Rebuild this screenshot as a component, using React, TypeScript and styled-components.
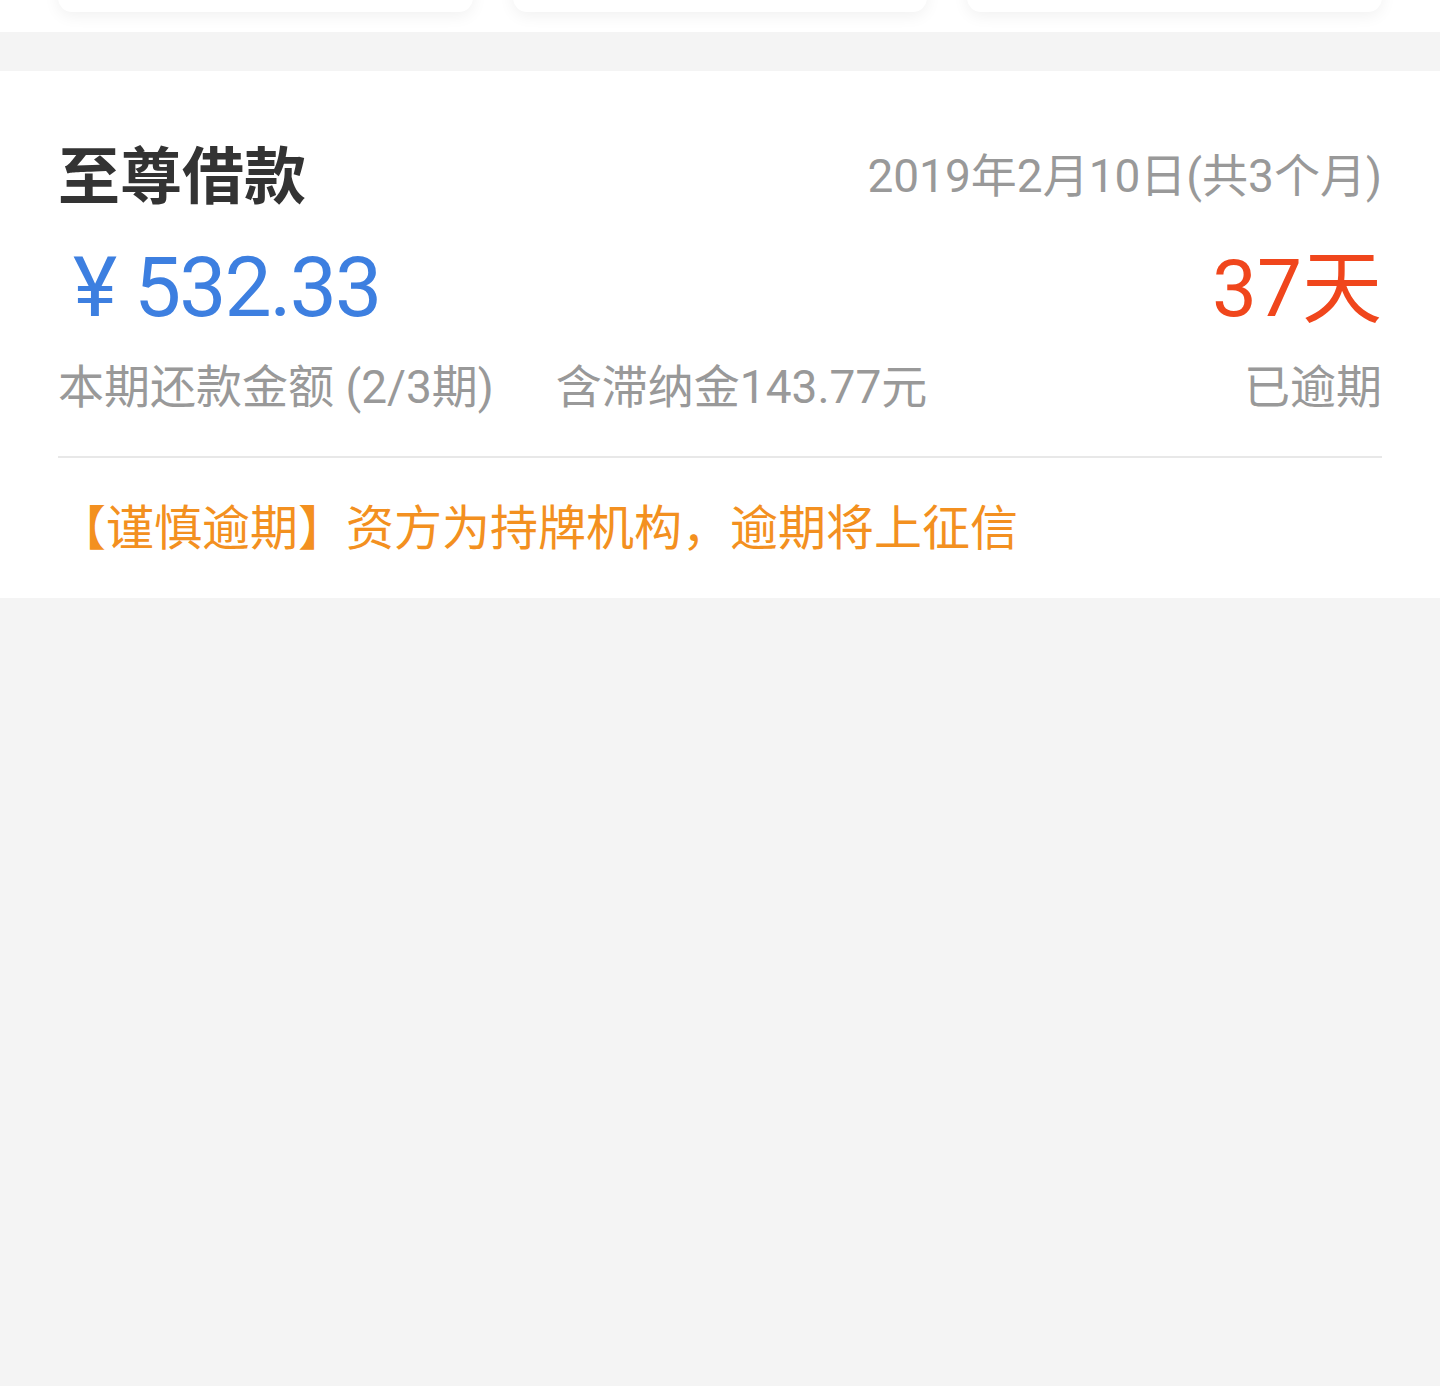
import React from 'react';
import styled, { createGlobalStyle } from 'styled-components';

const GlobalStyle = createGlobalStyle`
  html, body {
    margin: 0;
    padding: 0;
    background: #f4f4f4;
    font-family: Roboto, "Noto Sans CJK SC", sans-serif;
  }
`;

const Page = styled.div`
  width: 1440px;
  min-height: 1386px;
  background: #f4f4f4;
`;

const TopArea = styled.div`
  height: 32px;
  background: #fff;
  overflow: hidden;
  display: flex;
  gap: 40px;
  padding: 0 58px;
`;

const TopCard = styled.div`
  flex: 1;
  height: 200px;
  margin-top: -188px;
  background: #fff;
  border-radius: 14px;
  box-shadow: 0 4px 16px rgba(0, 0, 0, 0.06);
`;

const Card = styled.div`
  margin-top: 39px;
  background: #fff;
  padding: 49px 58px 0;
`;

const Row = styled.div<{ h: number }>`
  height: ${(p) => p.h}px;
  display: flex;
  align-items: center;
  justify-content: space-between;
`;

const Title = styled.div`
  font-size: 62px;
  font-weight: 700;
  color: #333;
  font-family: "Noto Sans CJK SC", sans-serif;
`;

const DateText = styled.div`
  font-size: 46px;
  color: #999;
`;

const Amount = styled.div`
  font-size: 84px;
  letter-spacing: -2px;
  color: #3d7fe0;
  padding-left: 15px;
`;

const Overdue = styled.div`
  font-size: 80px;
  color: #f0461c;
  padding-bottom: 12px;
`;

const SubLeft = styled.div`
  display: flex;
  gap: 62px;
`;

const Sub = styled.div`
  font-size: 46px;
  color: #999;
`;

const Divider = styled.div`
  margin-top: 40px;
  height: 2px;
  background: #e8e8e8;
`;

const Notice = styled.div`
  height: 140px;
  padding-bottom: 8px;
  box-sizing: border-box;
  display: flex;
  align-items: center;
  font-size: 48px;
  color: #f39020;
  font-family: "Noto Sans CJK SC", sans-serif;
`;

export default function App() {
  return (
    <Page>
      <GlobalStyle />
      <TopArea>
        <TopCard />
        <TopCard />
        <TopCard />
      </TopArea>
      <Card>
        <Row h={104}>
          <Title>至尊借款</Title>
          <DateText>2019年2月10日(共3个月)</DateText>
        </Row>
        <Row h={126}>
          <Amount>¥ 532.33</Amount>
          <Overdue>37天</Overdue>
        </Row>
        <Row h={66}>
          <SubLeft>
            <Sub>本期还款金额 (2/3期)</Sub>
            <Sub>含滞纳金143.77元</Sub>
          </SubLeft>
          <Sub>已逾期</Sub>
        </Row>
        <Divider />
        <Notice>【谨慎逾期】资方为持牌机构，逾期将上征信</Notice>
      </Card>
    </Page>
  );
}
